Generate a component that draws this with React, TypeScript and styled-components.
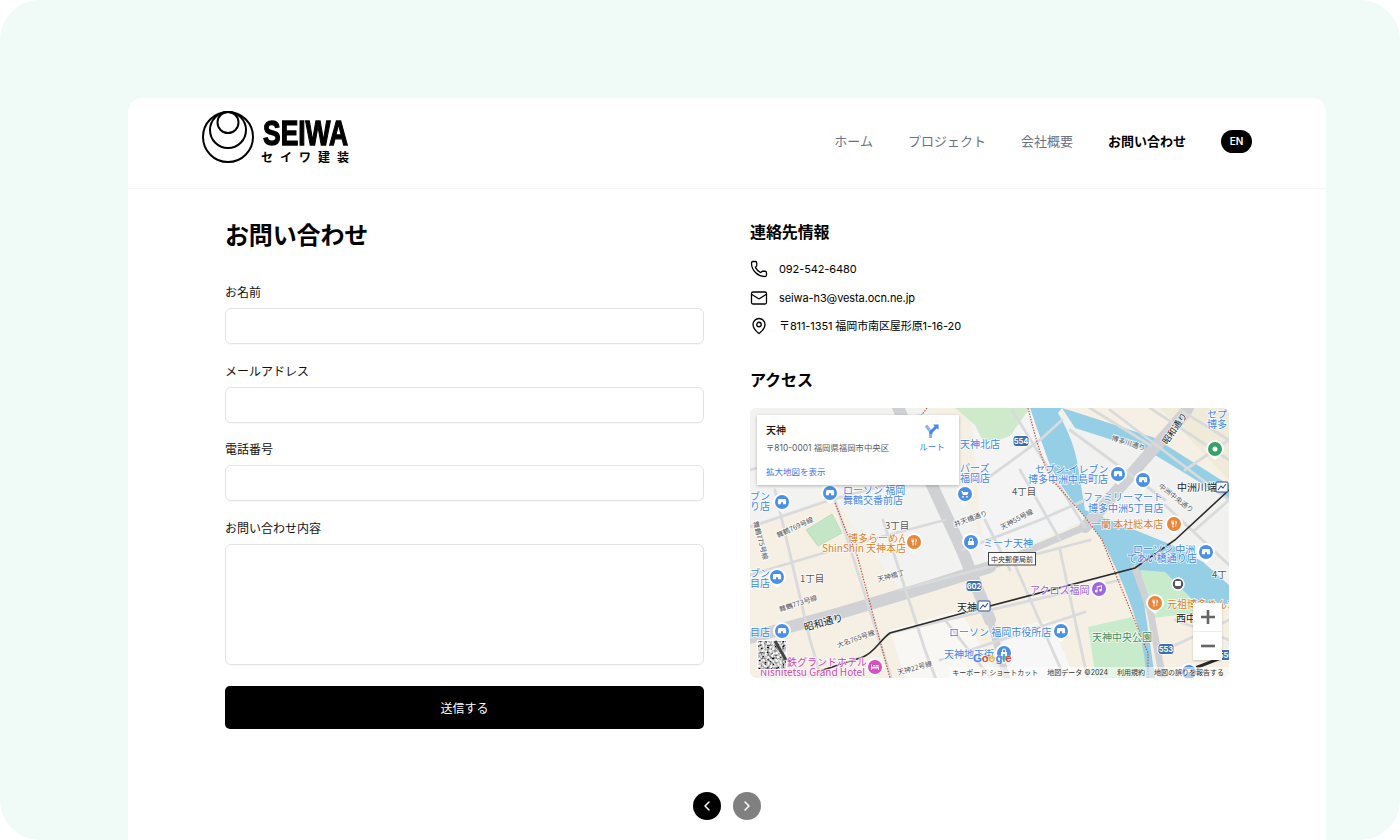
import React from "react";
import styled, { createGlobalStyle } from "styled-components";
import { ChevronLeft, ChevronRight, Mail, MapPin, Phone } from "lucide-react";

const GlobalStyle = createGlobalStyle`
  html, body { margin: 0; padding: 0; background: #fff; }
  body { font-family: Inter, "Noto Sans CJK JP", sans-serif; color: #000; }
  * { box-sizing: border-box; }
`;

const Frame = styled.div`
  width: 1400px; height: 840px; overflow: hidden; background: #f0faf7;
  border-radius: 40px; padding: 98px 74px 0 128px;
`;
const Card = styled.div`
  width: 1198px; height: 900px; background: #fff; border-radius: 14px 14px 0 0;
`;
const Header = styled.header`
  height: 91px; padding: 0 74px 4px; display: flex; align-items: center; justify-content: space-between;
  border-bottom: 1px solid #f4f5f6;
`;
const Logo = styled.div`display: flex; align-items: center; gap: 8px; margin-bottom: 8px;`;
const LogoText = styled.div`display: flex; flex-direction: column; width: 90px; padding-top: 9px;`;
const LogoName = styled.span`
  font-family: "Liberation Sans", sans-serif; font-weight: 700; font-size: 35px; line-height: 30px;
  transform: scaleX(.755); transform-origin: left center; white-space: nowrap; -webkit-text-stroke: 1.3px #000;
  margin-left: 1px;
`;
const LogoSub = styled.span`
  font-family: "Noto Sans CJK JP", sans-serif; font-weight: 700; font-size: 12px; line-height: 16px;
  letter-spacing: 7px; white-space: nowrap; margin: 1px 0 0 -1px;
`;
const Nav = styled.nav`display: flex; align-items: center; gap: 35px;`;
const NavLink = styled.a<{ $active?: boolean }>`
  font-size: 13px; line-height: 20px; font-weight: ${p => (p.$active ? 700 : 400)};
  color: ${p => (p.$active ? "#000" : "#6b7280")};
`;
const Lang = styled.span`
  width: 31px; height: 23px; border-radius: 12px; background: #000; color: #fff; font-size: 10px; font-weight: 600;
  display: flex; align-items: center; justify-content: center;
`;
const Main = styled.main`
  display: grid; grid-template-columns: 479px 479px; column-gap: 46px; padding: 29px 97px 0;
`;
const Title = styled.h1`margin: 2px 0 32px; font-size: 24px; line-height: 32px; font-weight: 700; letter-spacing: -.15px;`;
const Field = styled.div`display: flex; flex-direction: column; gap: 6px; margin-bottom: 18.5px;`;
const Label = styled.label`font-size: 12px; line-height: 18px; color: #111;`;
const Input = styled.input`
  height: 36px; border: 1px solid #e1e3e6; border-radius: 6px; background: #fff; box-shadow: 0 1px 1px rgba(0,0,0,.03);
`;
const TextArea = styled.textarea`
  height: 121px; border: 1px solid #e1e3e6; border-radius: 6px; background: #fff; resize: none;
  box-shadow: 0 1px 1px rgba(0,0,0,.03);
`;
const Submit = styled.button`
  display: block; width: 100%; height: 43px; border: 0; border-radius: 5px; background: #000;
  color: #fff; font-family: inherit; font-size: 12px; font-weight: 400;
`;
const SubmitWrap = styled.div`padding-top: 2.5px;`;
const Heading = styled.h2<{ $spaced?: boolean }>`
  margin: ${p => (p.$spaced ? "32px" : "2px")} 0 0; font-size: 16px; line-height: 24px; font-weight: 700;
  letter-spacing: -.1px;
`;
const ContactList = styled.div`display: flex; flex-direction: column; gap: 8.5px; margin-top: 15px;`;
const ContactRow = styled.div`
  display: flex; align-items: center; gap: 11px; font-size: 11px; line-height: 20px; color: #000; letter-spacing: -.1px;
`;
const MapBox = styled.div`
  position: relative; width: 479px; height: 270px; margin-top: 16px; border-radius: 7px; overflow: hidden; background: #f4efe2;
`;
const MapArt = styled.svg`display: block; font-family: "Noto Sans CJK JP", sans-serif;`;
const InfoCard = styled.div`
  position: absolute; left: 7px; top: 7px; width: 202px; height: 70px; background: #fff; padding: 9px 9px;
  box-shadow: 0 1px 3px rgba(0,0,0,.25);
`;
const InfoTitle = styled.div`font-size: 10px; line-height: 13px; font-weight: 500; color: #111;`;
const InfoAddress = styled.div`font-size: 8.4px; line-height: 12px; margin-top: 5px; color: #5b5b5b;`;
const BlueLink = styled.a`font-size: 8.5px; line-height: 12px; color: #3b78e7;`;
const MoreLink = styled(BlueLink)`position: absolute; left: 9px; bottom: 7px;`;
const Route = styled.div`
  position: absolute; right: 14px; top: 9px; width: 26px; display: flex; flex-direction: column; align-items: center; gap: 2px;
`;
const Zoom = styled.div`
  position: absolute; left: 443px; top: 195px; width: 29px; height: 57px; background: #fff;
  display: flex; flex-direction: column; align-items: center; box-shadow: 0 1px 2px rgba(0,0,0,.2);
`;
const ZoomPart = styled.div`
  flex: 1; width: 100%; display: flex; align-items: center; justify-content: center;
  &:first-child { border-bottom: 1px solid #eee; }
`;
const Attribution = styled.div`
  position: absolute; right: 0; bottom: 0; height: 11px; padding: 0 5px 0 3px; display: flex; gap: 9px; align-items: center;
  background: rgba(255,255,255,.55); font-size: 7px; line-height: 11px; color: #333; white-space: nowrap;
`;
const GoogleMark = styled.div`
  position: absolute; left: 223px; top: 244px; font-family: "Liberation Sans", sans-serif; font-size: 11.5px; font-weight: 700;
  letter-spacing: -.2px; text-shadow: 0 0 2px #fff;
`;
const Letter = styled.span<{ $c: string }>`color: ${p => p.$c};`;
const Pager = styled.div`display: flex; justify-content: center; gap: 12px; padding-top: 63px;`;
const PageButton = styled.button<{ $dim?: boolean }>`
  width: 28px; height: 28px; padding: 0; border: 0; border-radius: 50%; background: ${p => (p.$dim ? "#808080" : "#000")};
  color: #fff; display: flex; align-items: center; justify-content: center;
`;

type L = [number, number, string, string?, number?, number?];
const BLUE = "#3f86e6", ORANGE = "#d9802e", GREY = "#555", DARK = "#222";
const labels: L[] = [
  [750, 500, "ブン", BLUE], [750, 510, "り店", BLUE], [843, 494, "ローソン 福岡", BLUE], [843, 504, "舞鶴交番前店", BLUE],
  [960, 448, "天神北店", BLUE], [960, 472, "パーズ", BLUE], [960, 482, "福岡店", BLUE],
  [885, 529, "3丁目", GREY, 9.5], [848, 542, "博多らーめん", ORANGE], [822, 552, "ShinShin 天神本店", ORANGE],
  [983, 547, "ミーナ天神", BLUE], [1012, 495, "4丁目", GREY, 9.5], [1035, 473, "セブン-イレブン", BLUE],
  [1028, 483, "博多中洲中島町店", BLUE], [1083, 501, "ファミリーマート", BLUE], [1088, 512, "博多中洲5丁目店", BLUE],
  [1091, 528, "一蘭 本社総本店", ORANGE], [1177, 491, "中洲川端", DARK], [1207, 418, "セプ", BLUE], [1207, 428, "博多", BLUE],
  [1133, 553, "ローソン 中洲", BLUE], [1127, 562, "てあい橋通り店", BLUE], [1212, 578, "4丁", GREY, 9.5],
  [800, 582, "1丁目", GREY, 9.5], [750, 577, "ブン", BLUE], [750, 587, "目店", BLUE], [750, 636, "目店", BLUE],
  [787, 666, "鉄グランドホテル", "#d146b4"], [760, 676, "Nishitetsu Grand Hotel", "#d146b4"],
  [957, 611, "天神", DARK], [1030, 594, "アクロス福岡", "#9a5fd8"], [949, 636, "ローソン 福岡市役所店", BLUE],
  [944, 658, "天神地下街", BLUE], [1092, 641, "天神中央公園", "#3e8e62"], [1167, 608, "元祖博多めんた", ORANGE],
  [1176, 622, "西中", DARK],
  [778, 538, "舞鶴769号線", GREY, 7, -25], [753, 522, "舞鶴775号線", GREY, 7, 75], [955, 527, "井天橋通り", GREY, 7, -20],
  [1002, 530, "天神55号線", GREY, 7, -28], [1111, 440, "博多川通り", GREY, 7, 18], [1167, 445, "昭和通り", DARK, 9, -55],
  [1158, 487, "中洲中央通り", GREY, 7, 38], [878, 582, "天神橋丁", GREY, 7, -15], [780, 612, "舞鶴773号線", GREY, 7, -18],
  [805, 631, "昭和通り", DARK, 10, -15], [838, 648, "大名765号線", GREY, 7, -20], [898, 675, "天神22号線", GREY, 7, -15],
];
type P = [number, number, string, "store" | "lock" | "food" | "music" | "bed" | "cart" | "tree"];
const pins: P[] = [
  [782, 502, "#4a90e8", "store"], [830, 493, "#4a90e8", "store"], [965, 494, "#4a90e8", "cart"], [914, 542, "#e8863a", "food"],
  [971, 542, "#4a90e8", "lock"], [1118, 474, "#4a90e8", "store"], [1143, 480, "#4a90e8", "store"], [1174, 524, "#e8863a", "food"],
  [1215, 449, "#38a169", "tree"], [1206, 552, "#4a90e8", "store"], [777, 577, "#4a90e8", "store"], [782, 631, "#4a90e8", "store"],
  [875, 667, "#d94fc0", "bed"], [1099, 589, "#a066dd", "music"], [1061, 631, "#4a90e8", "store"], [1004, 653, "#4a90e8", "lock"],
  [1155, 603, "#e8863a", "food"], [1189, 672, "#4a90e8", "store"],
];
const shields: [number, number, string][] = [[1021, 441, "554"], [974, 586, "602"], [1166, 649, "553"], [1226, 655, "550"]];
const majorRoads = [
  "M742 640 L840 613 L927 587 L990 567",
  "M1085 527 L1185 413 L1192 400",
  "M925 470 L962 550 L990 620",
  "M895 400 L925 470",
];
const mediumRoads = ["M990 567 L1085 527", "M1135 568 L1150 610 L1165 690", "M990 620 L1010 690"];
const minorRoads = [
  "M750 470 L830 448 L920 415", "M750 527 L830 500 L925 475", "M750 575 L850 545 L945 520", "M985 480 L1040 440 L1062 420",
  "M962 550 L1040 520 L1085 500", "M1012 410 L1085 527", "M775 490 L810 640 L825 690", "M835 500 L895 690", "M883 520 L925 650 L940 690",
  "M900 590 L1090 540", "M890 633 L1120 580", "M945 620 L1000 690", "M1015 565 L1070 690", "M1060 550 L1090 690", "M940 660 L1085 612",
  "M1090 408 L1150 445", "M1070 430 L1165 500", "M1110 410 L1229 500", "M1150 408 L1229 460", "M1180 410 L1229 440", "M1165 505 L1229 565",
  "M1185 470 L1229 440", "M1195 530 L1229 500", "M1020 470 L1060 540", "M985 520 L1010 570", "M1175 620 L1229 640", "M1165 650 L1229 620",
];

function PinGlyph({ t }: { t: P[3] }) {
  switch (t) {
    case "store": return <path d="M-3.5 -3h7l.6 2v3.2h-8.2V-1z M-1 0.2v2h2v-2z" fill="#fff" fillRule="evenodd" />;
    case "lock": return <path d="M-3 -1h6v4h-6z M-2 -1v-1.5a2 2 0 0 1 4 0V-1h-1v-1.5a1 1 0 0 0-2 0V-1z" fill="#fff" />;
    case "food": return <path d="M-2.5 -3.5v3l1 .7v3.3h1v-3.3l.5-.7v-3h-.5v2h-.5v-2h-.5v2h-.5v-2z M1.5 -3.5c1.3 0 1.5 1.5 1.5 3h-.8v3.5h-.7z" fill="#fff" />;
    case "music": return <path d="M-1.5 2.2a1.3 1.3 0 1 1-.7-1.2V-2.8L2.8 -3.8V1.2a1.3 1.3 0 1 1-.7-1.1V-2.4L-1.5 -1.6z" fill="#fff" />;
    case "bed": return <path d="M-4 -2.5h1V0h7v3h-1V1.5H-3V3h-1z M-2 -2h2.5V-.4H-2z M1 -2h2a1 1 0 0 1 1 1v.6H1z" fill="#fff" />;
    case "cart": return <path d="M-3.8 -3h1.4l.5 1h5.4l-1.2 3H-2zM-2 2a.8.8 0 1 0 .01 0zM2 2a.8.8 0 1 0 .01 0z" fill="#fff" />;
    default: return <circle r="2.5" fill="#fff" />;
  }
}
function Metro({ x, y }: { x: number; y: number }) {
  return (
    <g transform={`translate(${x} ${y})`}>
      <rect x="-6" y="-5" width="12" height="10" rx="1" fill="#fff" stroke="#2a4d9c" strokeWidth="1" />
      <path d="M-4 3 L-1 -1 L1 1 L4 -3" fill="none" stroke="#2a4d9c" strokeWidth="1.1" />
    </g>
  );
}

function MapDrawing() {
  return (
    <MapArt width="479" height="270" viewBox="750 408 479 270">
      <defs>
        <filter id="sat" x="0" y="0" width="100%" height="100%">
          <feTurbulence type="fractalNoise" baseFrequency="0.4" numOctaves="2" seed="4" />
          <feColorMatrix values="2.2 0 0 0 -.55  2.2 0 0 0 -.55  2.2 0 0 0 -.55  0 0 0 0 1" />
        </filter>
      </defs>
      <rect x="750" y="408" width="479" height="270" fill="#f5f0e3" />
      {/* paler city blocks */}
      <path d="M750 408H930L990 560L900 590L835 500L750 527z" fill="#f2f2f0" />
      <path d="M970 408H1040L1085 520L985 565z" fill="#f4f4f4" />
      <path d="M1058 413L1150 452L1229 500V585L1135 530L1085 510z" fill="#f1f1ef" />
      <path d="M890 630L960 610L1000 678H905z" fill="#f8f7f3" />
      <path d="M1000 630L1050 620L1075 678H1010z" fill="#f7f7f7" />
      <path d="M1160 408H1229V480z" fill="#f0ead8" />
      {/* parks */}
      <path d="M955 408H1030L1010 436L985 445L975 425z" fill="#cfeacb" />
      <path d="M1088 627L1132 617L1148 653L1153 678H1096z" fill="#c8ebcb" />
      <path d="M806 530L832 514L842 533L818 546z" fill="#c5e6c6" stroke="#a8d5a8" strokeWidth=".6" />
      {/* water */}
      <path d="M1030 408H1062L1058 413C1068 430 1076 450 1078 467L1085 510L1135 530L1172 545L1203 562L1229 585V603L1195 620L1140 575L1155 678H1146C1146 640 1128 590 1102 540C1085 515 1060 490 1048 460z" fill="#95cfe5" />
      <path d="M1062 408L1075 428L1150 452L1229 500V485L1155 438L1075 412z" fill="#95cfe5" />
      <path d="M1140 570L1165 572L1205 612L1152 618z" fill="#c8ebcb" />
      <g fill="none" stroke="#cfd1d4" strokeLinecap="round">
        {majorRoads.map((d, i) => <path key={i} d={d} strokeWidth="12" />)}
        {mediumRoads.map((d, i) => <path key={i} d={d} strokeWidth="7" />)}
      </g>
      <g fill="none" stroke="#d9dadc" strokeLinecap="round">
        {minorRoads.map((d, i) => <path key={i} d={d} strokeWidth="2.8" />)}
      </g>
      <g fill="none" stroke="#c0503f" strokeWidth="1.2" strokeDasharray="1.4 1.4">
        <path d="M835 503L847 533L857 555L890 678" />
        <path d="M1028 408C1036 440 1044 470 1055 483L1085 517L1102 540L1118 580L1148 653V678" />
        <path d="M927 408L918 420" />
      </g>
      <path d="M817 672L863 657C875 652 880 640 890 633L967 612L1135 568L1175 540L1229 490" fill="none" stroke="#2b2b2b" strokeWidth="1.6" />
      <path d="M1190 670L1229 655" fill="none" stroke="#2b2b2b" strokeWidth="3" />
      {labels.map(([x, y, t, c = BLUE, s = 10, r = 0], i) => (
        <text key={i} x={x} y={y} fontSize={s} fill={c} transform={r ? `rotate(${r} ${x} ${y})` : undefined}
          stroke="#fff" strokeWidth="1.6" strokeOpacity=".8" paintOrder="stroke">{t}</text>
      ))}
      {pins.map(([x, y, c, t], i) => (
        <g key={i} transform={`translate(${x} ${y})`}>
          <path d="M-9 0a9 9 0 0 1 18 0c0 5-5 7-9 11c-4-4-9-6-9-11z" fill="#fff" />
          <circle r="7" fill={c} />
          <PinGlyph t={t} />
        </g>
      ))}
      {shields.map(([x, y, t]) => (
        <g key={t} transform={`translate(${x} ${y})`}>
          <rect x="-8" y="-5.5" width="16" height="11" rx="3" fill="#3d6fb0" stroke="#fff" />
          <text textAnchor="middle" y="3" fontSize="7.5" fontWeight="700" fill="#fff" fontFamily="Inter, sans-serif">{t}</text>
        </g>
      ))}
      <Metro x={1222} y={487} />
      <Metro x={984} y={606} />
      <g transform="translate(1178 584)">
        <circle r="6" fill="#556" stroke="#fff" strokeWidth="1.5" />
        <rect x="-3" y="-3" width="6" height="5" rx="1" fill="#fff" />
      </g>
      <g>
        <rect x="988.5" y="552.5" width="47" height="12.5" fill="#fff" stroke="#444" />
        <text x="991" y="562" fontSize="7" fill="#333">中央郵便局前</text>
      </g>
      <g>
        <rect x="757" y="640" width="30" height="30" fill="#fff" />
        <rect x="758" y="641" width="28" height="28" filter="url(#sat)" />
        <path d="M775 641L786 660" stroke="#444" strokeWidth="3" />
      </g>
    </MapArt>
  );
}

const RouteIcon = () => (
  <svg width="14" height="15" viewBox="0 0 14 15" fill="none">
    <path d="M1 1.5L5.5 7.5V14" stroke="#8db4f5" strokeWidth="3" />
    <path d="M5.5 10L6.5 7.5L11 3" stroke="#4285f4" strokeWidth="3" />
    <path d="M8 0.5H13.5V6z" fill="#4285f4" />
  </svg>
);

const LogoMark = () => (
  <svg width="52" height="52" viewBox="0 0 52 52" fill="none" stroke="#000" strokeWidth="2">
    <circle cx="26" cy="26" r="25" />
    <circle cx="26" cy="19" r="18" />
    <circle cx="26" cy="11.5" r="10.5" />
  </svg>
);

export default function App() {
  return (
    <>
      <GlobalStyle />
      <Frame>
        <Card>
          <Header>
            <Logo>
              <LogoMark />
              <LogoText>
                <LogoName>SEIWA</LogoName>
                <LogoSub>セイワ建装</LogoSub>
              </LogoText>
            </Logo>
            <Nav>
              <NavLink>ホーム</NavLink>
              <NavLink>プロジェクト</NavLink>
              <NavLink>会社概要</NavLink>
              <NavLink $active>お問い合わせ</NavLink>
              <Lang>EN</Lang>
            </Nav>
          </Header>
          <Main>
            <section>
              <Title>お問い合わせ</Title>
              <Field><Label>お名前</Label><Input /></Field>
              <Field><Label>メールアドレス</Label><Input /></Field>
              <Field><Label>電話番号</Label><Input /></Field>
              <Field><Label>お問い合わせ内容</Label><TextArea /></Field>
              <SubmitWrap><Submit>送信する</Submit></SubmitWrap>
            </section>
            <section>
              <Heading>連絡先情報</Heading>
              <ContactList>
                <ContactRow><Phone size={18} strokeWidth={1.7} color="#000" />092-542-6480</ContactRow>
                <ContactRow><Mail size={18} strokeWidth={1.7} color="#000" />seiwa-h3@vesta.ocn.ne.jp</ContactRow>
                <ContactRow><MapPin size={18} strokeWidth={1.7} color="#000" />〒811-1351 福岡市南区屋形原1-16-20</ContactRow>
              </ContactList>
              <Heading $spaced>アクセス</Heading>
              <MapBox>
                <MapDrawing />
                <InfoCard>
                  <InfoTitle>天神</InfoTitle>
                  <InfoAddress>〒810-0001 福岡県福岡市中央区</InfoAddress>
                  <MoreLink>拡大地図を表示</MoreLink>
                  <Route><RouteIcon /><BlueLink>ルート</BlueLink></Route>
                </InfoCard>
                <Zoom>
                  <ZoomPart>
                    <svg width="14" height="14" viewBox="0 0 14 14"><path d="M5.7 0h2.6v5.7H14v2.6H8.3V14H5.7V8.3H0V5.7h5.7z" fill="#666" /></svg>
                  </ZoomPart>
                  <ZoomPart>
                    <svg width="14" height="4" viewBox="0 0 14 4"><rect y=".7" width="14" height="2.6" fill="#666" /></svg>
                  </ZoomPart>
                </Zoom>
                <GoogleMark>
                  <Letter $c="#4285f4">G</Letter><Letter $c="#ea4335">o</Letter><Letter $c="#fbbc05">o</Letter>
                  <Letter $c="#4285f4">g</Letter><Letter $c="#34a853">l</Letter><Letter $c="#ea4335">e</Letter>
                </GoogleMark>
                <Attribution>
                  <span>キーボード ショートカット</span><span>地図データ ©2024</span><span>利用規約</span><span>地図の誤りを報告する</span>
                </Attribution>
              </MapBox>
            </section>
          </Main>
          <Pager>
            <PageButton><ChevronLeft size={16} strokeWidth={2.2} /></PageButton>
            <PageButton $dim><ChevronRight size={16} strokeWidth={2.2} /></PageButton>
          </Pager>
        </Card>
      </Frame>
    </>
  );
}
